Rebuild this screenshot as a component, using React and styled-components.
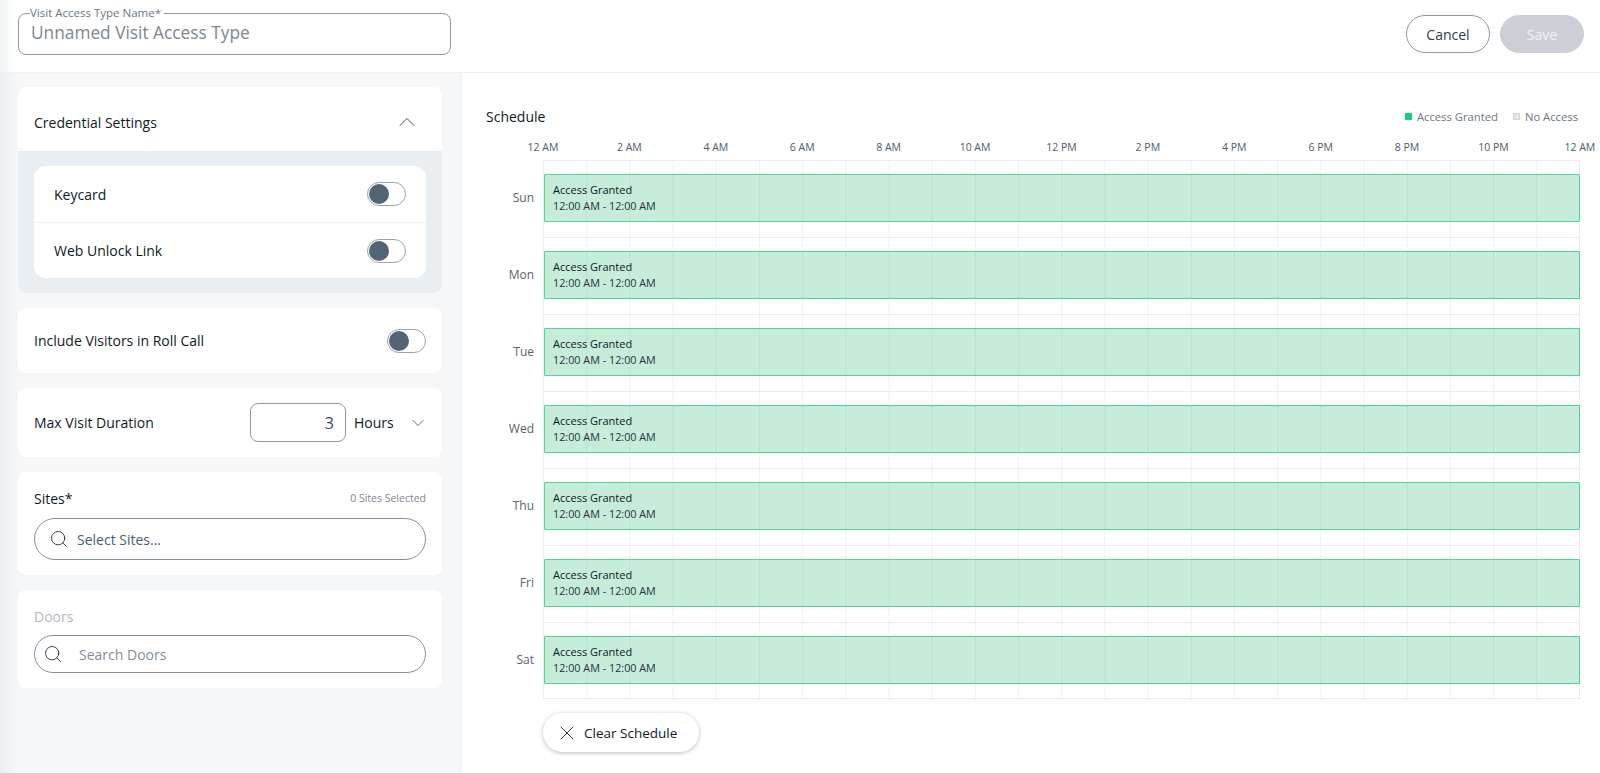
import React from "react";
import styled, { createGlobalStyle } from "styled-components";
import { ChevronDown, ChevronUp, Search, X } from "lucide-react";

const HOURS = [
  "12 AM", "2 AM", "4 AM", "6 AM", "8 AM", "10 AM", "12 PM",
  "2 PM", "4 PM", "6 PM", "8 PM", "10 PM", "12 AM",
];
const DAYS = ["Sun", "Mon", "Tue", "Wed", "Thu", "Fri", "Sat"];

const GlobalStyle = createGlobalStyle`
  html, body { margin: 0; height: 100%; background: #fff; overflow: hidden; }
  * { box-sizing: border-box; }
  body { font-family: "Open Sans", "Liberation Sans", sans-serif; color: #0d1a26; }
`;

const Page = styled.div`
  width: 1600px;
  height: 773px;
  display: flex;
  flex-direction: column;
  overflow: hidden;
`;

const TopBar = styled.header`
  height: 73px;
  flex: none;
  display: flex;
  align-items: flex-start;
  justify-content: space-between;
  padding: 7px 16px 0 18px;
  border-bottom: 1px solid #eef0f4;
  background: linear-gradient(90deg, #f1f3f5 0, #fff 18px);
`;

const NameField = styled.fieldset`
  width: 433px;
  height: 48px;
  margin: 0;
  padding: 0 11px;
  border: 1px solid #8d97a5;
  border-radius: 8px;
  background: transparent;
  min-inline-size: 0;
`;

const NameLegend = styled.legend`
  font-size: 11.5px;
  line-height: 12px;
  color: #6b7683;
  padding: 0 3px 0 0;
`;

const NameValue = styled.div`
  font-size: 17.3px;
  line-height: 24px;
  margin: 2px 0 0 1px;
  color: #7d8791;
`;

const Actions = styled.div`
  display: flex;
  gap: 10px;
  padding-top: 8px;
`;

const Pill = styled.button`
  width: 84px;
  height: 38px;
  border-radius: 19px;
  font: 500 14px "Open Sans", sans-serif;
  border: 1px solid ${({ $primary }) => ($primary ? "#ccd0d6" : "#8d97a5")};
  background: ${({ $primary }) => ($primary ? "#ccd0d6" : "#fff")};
  color: ${({ $primary }) => ($primary ? "#f2f3f5" : "#2a3d52")};
`;

const Body = styled.div`
  flex: 1;
  display: flex;
  min-height: 0;
`;

const Sidebar = styled.aside`
  width: 462px;
  flex: none;
  padding: 14px 19px 0 18px;
  display: flex;
  flex-direction: column;
  gap: 15px;
  border-right: 1px solid #eef0f4;
  background: linear-gradient(90deg, #ebeef2 0, #f6f7f9 18px);
`;

const Card = styled.section`
  background: #fff;
  border-radius: 8px;
  overflow: hidden;
  height: ${({ $height }) => $height}px;
  flex: none;
`;

const RowCard = styled(Card)`
  display: flex;
  align-items: center;
  justify-content: space-between;
  padding: 0 16px;
`;

const FieldCard = styled(Card)`
  padding: 16px 16px 0;
`;

const CardHeader = styled.div`
  height: 64px;
  display: flex;
  align-items: center;
  justify-content: space-between;
  padding: 6px 21px 0 16px;
`;

const Label = styled.span`
  font-size: 14px;
  font-weight: 500;
  color: ${({ $muted }) => ($muted ? "#b4b9c0" : "#0d1a26")};
`;

const CredentialPanel = styled.div`
  background: #e9eef2;
  padding: 15px 16px;
`;

const CredentialList = styled.div`
  background: #fff;
  border-radius: 12px;
`;

const CredentialRow = styled.div`
  height: 56px;
  display: flex;
  align-items: center;
  justify-content: space-between;
  padding: 0 20px;
  & + & {
    border-top: 1px solid #eff1f5;
  }
`;

const ToggleTrack = styled.span`
  width: 39px;
  height: 24px;
  border-radius: 12px;
  border: 1px solid #99a2ae;
  background: #fff;
  display: flex;
  align-items: center;
  padding-left: 1px;
`;

const ToggleKnob = styled.span`
  width: 20px;
  height: 20px;
  border-radius: 50%;
  background: #536476;
`;

const DurationControls = styled.div`
  display: flex;
  align-items: center;
  margin-right: -2px;
`;

const NumberBox = styled.div`
  width: 96px;
  height: 39px;
  border: 1px solid #8d97a5;
  border-radius: 8px;
  display: flex;
  align-items: center;
  justify-content: flex-end;
  padding-right: 11px;
  font-size: 16px;
  color: #3d4a58;
`;

const Unit = styled.span`
  margin-left: 8px;
  width: 54px;
  font-size: 14px;
  font-weight: 500;
`;

const FieldHead = styled.div`
  display: flex;
  align-items: center;
  justify-content: space-between;
  height: 20px;
  margin-bottom: ${({ $gap }) => $gap}px;
`;

const Count = styled.span`
  font-size: 10.5px;
  color: #7d8791;
`;

const SearchBox = styled.div`
  height: ${({ $height }) => $height}px;
  border: 1px solid #8290a0;
  border-radius: 21px;
  display: flex;
  align-items: center;
  padding-left: ${({ $inset }) => $inset}px;
  gap: ${({ $gap }) => $gap}px;
`;

const SearchText = styled.span`
  font-size: 14px;
  font-weight: ${({ $strong }) => ($strong ? 500 : 400)};
  color: ${({ $strong }) => ($strong ? "#4a5d72" : "#858e98")};
`;

const Main = styled.main`
  flex: 1;
  min-width: 0;
  padding: 33px 20px 0 24px;
`;

const ScheduleHead = styled.div`
  display: flex;
  align-items: center;
  justify-content: space-between;
  height: 20px;
  padding-right: 2px;
`;

const Legend = styled.div`
  display: flex;
  align-items: center;
  gap: 15px;
  font-size: 11.25px;
  color: #6c7682;
`;

const LegendItem = styled.span`
  display: flex;
  align-items: center;
  gap: 5px;
`;

const Swatch = styled.i`
  width: 7px;
  height: 7px;
  background: ${({ $on }) => ($on ? "#1fc983" : "#e3e6ea")};
  border: 1px solid ${({ $on }) => ($on ? "#1fc983" : "#d0d4da")};
`;

const HourAxis = styled.div`
  margin-left: 57px;
  width: 1037px;
  height: 34px;
  display: flex;
  justify-content: space-between;
  align-items: center;
  padding-top: 8px;
`;

const HourTick = styled.span`
  width: 0;
  display: flex;
  justify-content: center;
  white-space: nowrap;
  font-size: 10.5px;
  color: #4e5a67;
`;

const Grid = styled.div`
  display: grid;
  grid-template-columns: 57px 1037px;
  grid-auto-rows: 77px;
`;

const DayLabel = styled.div`
  display: flex;
  align-items: center;
  justify-content: flex-end;
  padding: 0 9px 2px 0;
  font-size: 12px;
  color: #59636f;
`;

const DayTrack = styled.div`
  position: relative;
  border-top: 1px solid #e9ecf1;
  border-left: 1px solid #e9ecf1;
  border-right: 1px solid #e9ecf1;
  padding-top: 13px;
  background-image: linear-gradient(90deg, #eff1f5 1px, transparent 1px);
  background-size: 43.2px 100%;
  background-position: -1px 0;
  &:last-child {
    border-bottom: 1px solid #e9ecf1;
  }
`;

const Block = styled.div`
  height: 48px;
  margin-right: -1px;
  padding: 7px 8px 0;
  border: 1px solid #55d096;
  border-radius: 1px;
  background-color: rgba(31, 186, 110, 0.26);
  line-height: 16px;
`;

const BlockTitle = styled.div`
  color: #0d1a26;
  font-size: 11px;
  font-weight: 500;
`;

const BlockTime = styled.div`
  color: #26333f;
  font-size: 10.8px;
`;

const ClearButton = styled.button`
  margin: 14px 0 0 57px;
  width: 156px;
  height: 39px;
  border: 0;
  border-radius: 20px;
  background: #fff;
  box-shadow: 0 1px 4px rgba(30, 40, 55, 0.3);
  display: flex;
  align-items: center;
  gap: 5px;
  padding: 0 0 0 12px;
  font: 500 13.5px "Open Sans", sans-serif;
  color: #0d1a26;
`;

function Toggle() {
  return (
    <ToggleTrack>
      <ToggleKnob />
    </ToggleTrack>
  );
}

export default function App() {
  return (
    <Page>
      <GlobalStyle />
      <TopBar>
        <NameField>
          <NameLegend>Visit Access Type Name*</NameLegend>
          <NameValue>Unnamed Visit Access Type</NameValue>
        </NameField>
        <Actions>
          <Pill>Cancel</Pill>
          <Pill $primary>Save</Pill>
        </Actions>
      </TopBar>
      <Body>
        <Sidebar>
          <Card>
            <CardHeader>
              <Label>Credential Settings</Label>
              <ChevronUp size={28} strokeWidth={0.85} color="#3d4a58" />
            </CardHeader>
            <CredentialPanel>
              <CredentialList>
                <CredentialRow>
                  <Label>Keycard</Label>
                  <Toggle />
                </CredentialRow>
                <CredentialRow>
                  <Label>Web Unlock Link</Label>
                  <Toggle />
                </CredentialRow>
              </CredentialList>
            </CredentialPanel>
          </Card>
          <RowCard $height={65}>
            <Label>Include Visitors in Roll Call</Label>
            <Toggle />
          </RowCard>
          <RowCard $height={69}>
            <Label>Max Visit Duration</Label>
            <DurationControls>
              <NumberBox>3</NumberBox>
              <Unit>Hours</Unit>
              <ChevronDown size={20} strokeWidth={1} color="#3d4a58" />
            </DurationControls>
          </RowCard>
          <FieldCard $height={103}>
            <FieldHead $gap={10}>
              <Label>Sites*</Label>
              <Count>0 Sites Selected</Count>
            </FieldHead>
            <SearchBox $height={42} $inset={14} $gap={8}>
              <Search size={20} strokeWidth={1.1} color="#2a3340" />
              <SearchText $strong>Select Sites...</SearchText>
            </SearchBox>
          </FieldCard>
          <FieldCard $height={98}>
            <FieldHead $gap={9}>
              <Label $muted>Doors</Label>
            </FieldHead>
            <SearchBox $height={38} $inset={8} $gap={16}>
              <Search size={20} strokeWidth={1.1} color="#2a3340" />
              <SearchText>Search Doors</SearchText>
            </SearchBox>
          </FieldCard>
        </Sidebar>
        <Main>
          <ScheduleHead>
            <Label>Schedule</Label>
            <Legend>
              <LegendItem>
                <Swatch $on />
                Access Granted
              </LegendItem>
              <LegendItem>
                <Swatch />
                No Access
              </LegendItem>
            </Legend>
          </ScheduleHead>
          <HourAxis>
            {HOURS.map((hour, i) => (
              <HourTick key={i}>{hour}</HourTick>
            ))}
          </HourAxis>
          <Grid>
            {DAYS.map((day) => (
              <React.Fragment key={day}>
                <DayLabel>{day}</DayLabel>
                <DayTrack>
                  <Block>
                    <BlockTitle>Access Granted</BlockTitle>
                    <BlockTime>12:00 AM - 12:00 AM</BlockTime>
                  </Block>
                </DayTrack>
              </React.Fragment>
            ))}
          </Grid>
          <ClearButton>
            <X size={24} strokeWidth={0.85} color="#0d1a26" />
            Clear Schedule
          </ClearButton>
        </Main>
      </Body>
    </Page>
  );
}
